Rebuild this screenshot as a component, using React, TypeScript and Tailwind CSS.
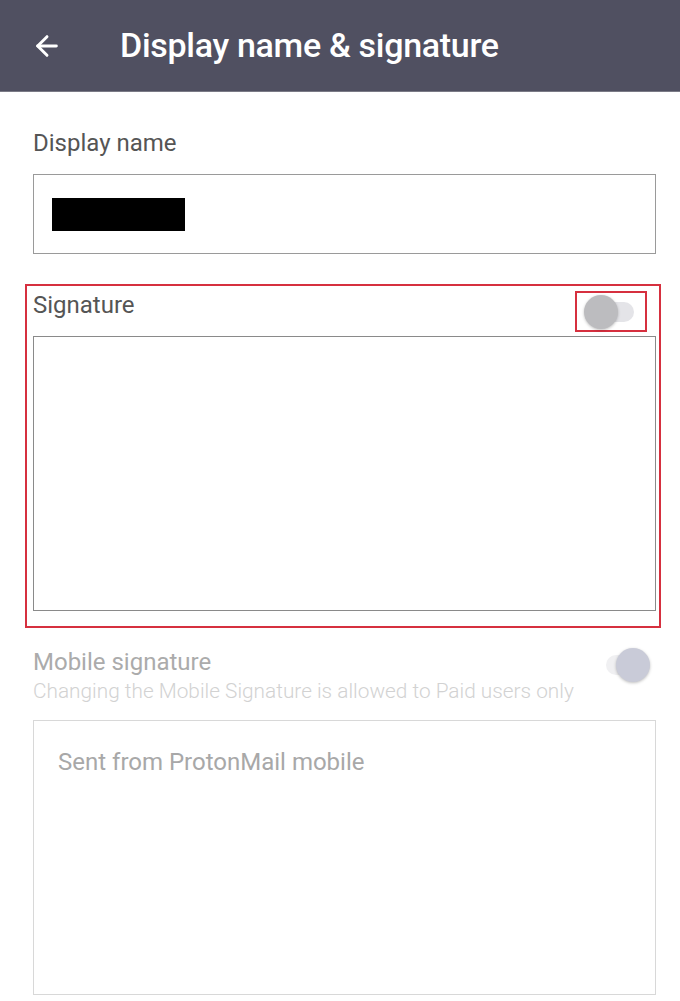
import { ArrowLeft } from "lucide-react";

function Toggle({ on, disabled }: { on?: boolean; disabled?: boolean }) {
  return (
    <div className="relative w-[50px] h-[34px] flex items-center">
      <div
        className={
          "ml-[6px] w-[44px] h-[20px] rounded-full " +
          (disabled ? "bg-[#f0f0f2]" : "bg-[#e4e4e8]")
        }
      />
      <div
        className={
          "absolute top-0 w-[34px] h-[34px] rounded-full shadow-[0_1px_3px_rgba(0,0,0,0.25)] " +
          (on ? "right-0 bg-[#c9cbd8]" : "left-0 bg-[#bcbcbf]")
        }
      />
    </div>
  );
}

export default function App() {
  return (
    <div className="w-[680px] h-[1001px] bg-white overflow-hidden font-['Roboto',sans-serif]">
      <header className="h-[92px] bg-[#505061] flex items-center border-b border-[#7a7a86]">
        <div className="w-[120px] pl-[31px] flex items-center">
          <ArrowLeft size={32} strokeWidth={2.2} className="text-white" />
        </div>
        <h1 className="text-white text-[34px] font-medium tracking-[-0.3px]">
          Display name &amp; signature
        </h1>
      </header>

      <main className="px-[33px] pr-[24px]">
        <label className="block mt-[36px] text-[24px] leading-[30px] text-[#555]">
          Display name
        </label>
        <div className="mt-[16px] h-[80px] border border-[#9a9a9a] flex items-center pl-[18px]">
          <div className="w-[133px] h-[33px] bg-black" />
        </div>

        <section className="mt-[30px] ml-[-8px] mr-[-5px] border-2 border-[#d6303f] pl-[6px] pr-[3px] pb-[15px]">
          <div className="flex items-start justify-between pt-[5px]">
            <span className="text-[24px] leading-[28px] text-[#555]">Signature</span>
            <div className="mr-[9px] w-[72px] h-[41px] border-2 border-[#d6303f] flex items-center pl-[7px]">
              <Toggle />
            </div>
          </div>
          <div className="mt-[4px] h-[275px] border border-[#8a8a8a]" />
        </section>

        <div className="mt-[20px] flex items-start justify-between">
          <div>
            <div className="text-[24px] leading-[28px] text-[#ababab]">Mobile signature</div>
            <div className="mt-[3px] text-[20.8px] leading-[24px] font-light text-[#d2d2d2]">
              Changing the Mobile Signature is allowed to Paid users only
            </div>
          </div>
          <div className="mr-[6px]">
            <Toggle on disabled />
          </div>
        </div>

        <div className="mt-[17px] h-[275px] border border-[#d8d8d8] px-[24px] pt-[27px]">
          <span className="text-[24px] leading-[28px] text-[#a8a8a8]">Sent from ProtonMail mobile</span>
        </div>
      </main>
    </div>
  );
}
